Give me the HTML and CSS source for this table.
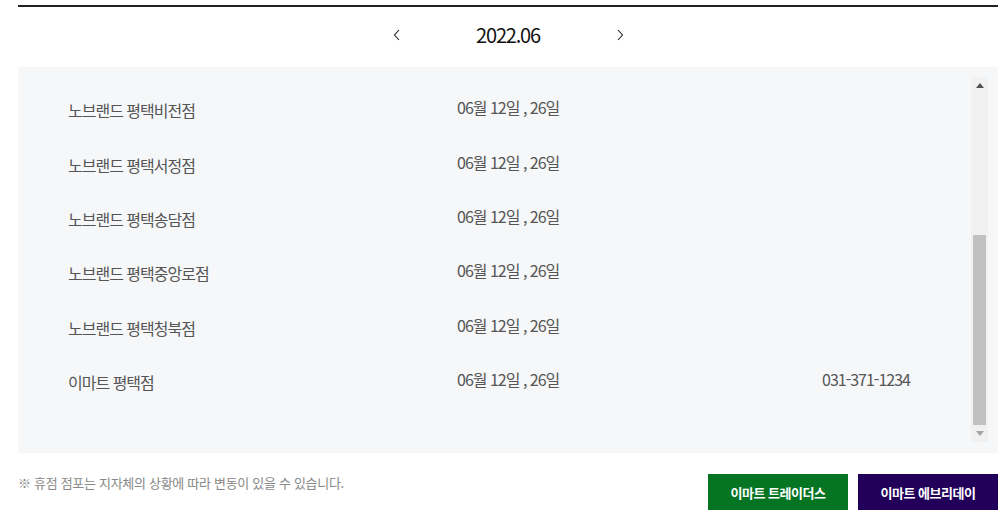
FILE: index.html
```html
<!DOCTYPE html>
<html lang="ko">
<head>
<meta charset="utf-8">
<link rel="stylesheet" href="styles.css">
</head>
<body>
<div class="wrap">
  <div class="topline"></div>
  <div class="month-nav">
    <span class="arrow">
      <svg width="8" height="12" viewBox="0 0 8 12"><path d="M6 1 L1.5 6 L6 11" fill="none" stroke="#222" stroke-width="1.1"/></svg>
    </span>
    <span class="month">2022.06</span>
    <span class="arrow">
      <svg width="8" height="12" viewBox="0 0 8 12"><path d="M2 1 L6.5 6 L2 11" fill="none" stroke="#222" stroke-width="1.1"/></svg>
    </span>
  </div>
  <div class="listbox">
    <div class="list">
      <div class="row"><span class="name">노브랜드 평택비전점</span><span class="date">06월 12일 , 26일</span><span class="tel"></span></div>
      <div class="row"><span class="name">노브랜드 평택서정점</span><span class="date">06월 12일 , 26일</span><span class="tel"></span></div>
      <div class="row"><span class="name">노브랜드 평택송담점</span><span class="date">06월 12일 , 26일</span><span class="tel"></span></div>
      <div class="row"><span class="name">노브랜드 평택중앙로점</span><span class="date">06월 12일 , 26일</span><span class="tel"></span></div>
      <div class="row"><span class="name">노브랜드 평택청북점</span><span class="date">06월 12일 , 26일</span><span class="tel"></span></div>
      <div class="row"><span class="name">이마트 평택점</span><span class="date">06월 12일 , 26일</span><span class="tel">031-371-1234</span></div>
    </div>
    <div class="scrollbar">
      <div class="sb-btn"><svg width="8" height="5" viewBox="0 0 8 5"><path d="M0 5 L4 0 L8 5 Z" fill="#505050"/></svg></div>
      <div class="sb-track"><div class="sb-thumb"></div></div>
      <div class="sb-btn"><svg width="8" height="5" viewBox="0 0 8 5"><path d="M0 0 L8 0 L4 5 Z" fill="#a3a3a3"/></svg></div>
    </div>
  </div>
  <div class="footer">
    <p class="note">※ 휴점 점포는 지자체의 상황에 따라 변동이 있을 수 있습니다.</p>
    <div class="buttons">
      <a class="btn btn-green">이마트 트레이더스</a>
      <a class="btn btn-purple">이마트 에브리데이</a>
    </div>
  </div>
</div>
</body>
</html>
```

FILE: styles.css
```css
* { box-sizing: border-box; }
html, body { margin: 0; padding: 0; background: #fff; }
body {
  font-family: "Noto Sans CJK KR", "Noto Sans", sans-serif;
  color: #555;
}
.wrap {
  width: 980px;
  margin-left: 18px;
  padding-top: 5px;
}
.topline {
  height: 2px;
  background: #222;
}
.month-nav {
  height: 60px;
  padding-bottom: 6px;
  display: flex;
  align-items: center;
  justify-content: center;
}
.arrow {
  display: flex;
  width: 8px;
  height: 12px;
  margin-top: 2px;
}
.month {
  width: 215px;
  text-align: center;
  font-size: 20px;
  color: #111;
  letter-spacing: -1.2px;
  font-weight: 400;
}
.listbox {
  height: 386px;
  background: #f6f7f9;
  padding: 10px 10px 11px 10px;
  display: flex;
}
.list {
  flex: 1;
  padding-top: 5px;
}
.row {
  height: 54.4px;
  display: grid;
  grid-template-columns: 429px 365px 1fr;
  align-items: center;
  font-size: 16px;
  letter-spacing: -1px;
  color: #555;
}
.name {
  padding-left: 40px;
  margin-top: 2px;
}
.date { margin-top: -4px; }
.tel { margin-top: -4px; }
.scrollbar {
  width: 17px;
  display: flex;
  flex-direction: column;
  background: #f1f1f1;
}
.sb-btn {
  height: 17px;
  display: flex;
  align-items: center;
  justify-content: center;
}
.sb-track {
  flex: 1;
  display: flex;
  flex-direction: column;
  justify-content: flex-end;
  padding: 0 2px 0 2px;
}
.sb-thumb {
  height: 190px;
  background: #c1c1c1;
}
.footer {
  display: flex;
  justify-content: space-between;
  align-items: flex-start;
}
.note {
  margin: 20px 0 0 0;
  font-size: 13px;
  color: #888;
  letter-spacing: -0.3px;
}
.buttons {
  display: flex;
  gap: 10px;
  margin-top: 21px;
}
.btn {
  width: 140px;
  height: 36px;
  display: flex;
  align-items: center;
  justify-content: center;
  color: #fff;
  font-size: 13px;
  font-weight: 700;
  letter-spacing: -0.5px;
}
.btn-green { background: #057524; }
.btn-purple { background: #22005a; }
```
